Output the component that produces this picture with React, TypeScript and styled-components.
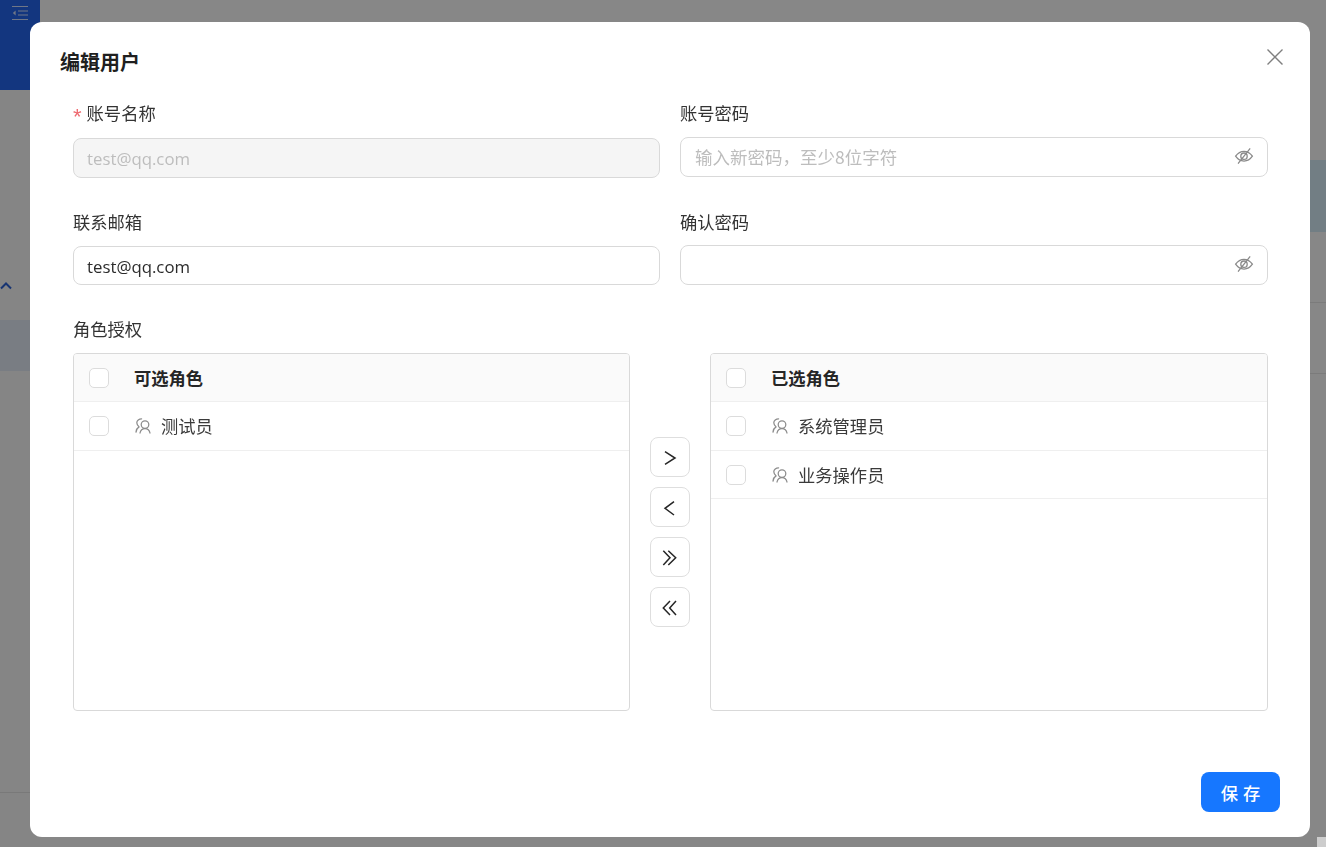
import React from "react";
import styled, { createGlobalStyle } from "styled-components";

const Global = createGlobalStyle`
  html, body { margin: 0; padding: 0; height: 100%; overflow: hidden; background: #fff; }
  * { box-sizing: border-box; }
  body { font-family: "Noto Sans CJK SC", "Open Sans", sans-serif; color: #262626; }
`;

const FONT = `"Open Sans", "Noto Sans CJK SC", sans-serif`;

/* page behind the dialog */
const Page = styled.div`
  display: grid;
  grid-template-columns: 40px 1fr;
  height: 847px;
  overflow: hidden;
  background: #fff;
`;
const Sidebar = styled.aside`
  display: flex;
  flex-direction: column;
  background: #fbfbfb;
`;
const SideHead = styled.div`
  height: 90px;
  padding: 2px 0 0 12px;
  background: #2466f0;
  color: #d4e0ff;
`;
const SideToggle = styled.div`
  height: 42px;
  margin-top: 175px;
  padding: 6px 0 0 0;
  color: #2d63d8;
`;
const SideActive = styled.div`
  height: 51px;
  margin-top: 13px;
  background: #e4ecf8;
`;
const SideFill = styled.div`
  flex: 1;
  margin-top: 421px;
  border-top: 1px solid #e4e4e4;
`;
const Main = styled.main`
  display: flex;
  flex-direction: column;
  padding-top: 160px;
`;
const Banner = styled.div`
  height: 72px;
  background: #d8eefa;
`;
const TableRow = styled.div`
  height: 71px;
  border-bottom: 1px solid #e8e8e8;
`;
const Corner = styled.div`
  position: fixed;
  right: 0;
  bottom: 0;
  width: 9px;
  height: 10px;
  background: #cdcdcd;
  z-index: 5;
`;

/* dialog */
const Mask = styled.div`
  position: fixed;
  inset: 0;
  background: rgba(0, 0, 0, 0.47);
`;
const Dialog = styled.section`
  position: absolute;
  left: 30px;
  top: 22px;
  width: 1280px;
  height: 815px;
  background: #fff;
  border-radius: 12px;
  display: flex;
  flex-direction: column;
`;
const Head = styled.header`
  display: flex;
  justify-content: space-between;
  align-items: flex-start;
  height: 80px;
  padding: 24px 25px 0 30px;
`;
const Title = styled.h2`
  margin: 0;
  font-size: 20px;
  line-height: 32px;
  font-weight: 700;
  color: #1f1f1f;
`;
const Close = styled.button`
  border: 0;
  padding: 0;
  margin-top: 1px;
  width: 20px;
  height: 20px;
  background: none;
  color: #7f7f7f;
  display: flex;
`;
const Body = styled.div`
  flex: 1;
  padding: 0 42px 0 43px;
`;
const FormGrid = styled.div`
  display: grid;
  grid-template-columns: 587px 588px;
  column-gap: 20px;
  row-gap: 32px;
  align-items: start;
`;
const Field = styled.div``;
const Label = styled.label<{ $low?: boolean; $tall?: boolean }>`
  display: block;
  height: 24px;
  margin-bottom: ${(p) => (p.$low ? "12px" : "11px")};
  font-size: 17.3px;
  line-height: ${(p) => (p.$tall ? "24px" : "22px")};
  color: #333;
`;
const Star = styled.span`
  color: #ee6a70;
  margin-right: 5px;
  font-size: 22px;
  line-height: 0;
  vertical-align: -4px;
  font-family: "Liberation Sans", sans-serif;
`;
const InputBox = styled.div<{ $disabled?: boolean; $short?: boolean }>`
  height: ${(p) => (p.$short ? "39px" : "40px")};
  display: flex;
  align-items: center;
  padding: ${(p) => (p.$short ? "1px 14px 0" : "0 14px")};
  border: 1px solid #d9d9d9;
  border-radius: 8px;
  background: ${(p) => (p.$disabled ? "#f5f5f5" : "#fff")};
`;
const InputText = styled.span<{ $muted?: boolean }>`
  flex: 1;
  margin-left: -1px;
  font-family: ${FONT};
  font-size: 16.8px;
  color: ${(p) => (p.$muted ? "#bdbdbd" : "#2b2b2b")};
`;
const Placeholder = styled.span`
  flex: 1;
  padding-bottom: 2px;
  font-size: 17.5px;
  color: #bdbdbd;
`;
const Suffix = styled.span`
  display: flex;
  margin: -2px -1px 0 auto;
  color: #8a8a8a;
`;
const RoleLabel = styled(Label)`
  margin: 32px 0 12px;
`;
const Transfer = styled.div`
  display: grid;
  grid-template-columns: 557px 80px 558px;
  height: 358px;
`;
const Panel = styled.div`
  border: 1px solid #d9d9d9;
  border-radius: 4px;
  overflow: hidden;
`;
const PanelHead = styled.div`
  display: flex;
  align-items: center;
  height: 48px;
  padding-left: 15px;
  background: #fafafa;
  border-bottom: 1px solid #efefef;
  font-size: 17.3px;
  font-weight: 700;
  color: #262626;
`;
const PanelRow = styled.div`
  display: flex;
  align-items: center;
  height: 49px;
  padding-left: 15px;
  border-bottom: 1px solid #efefef;
  font-size: 17.3px;
  color: #3a3a3a;
  & + & {
    height: 48px;
  }
`;
const Check = styled.span`
  flex: none;
  width: 20px;
  height: 20px;
  border: 1px solid #dcdcdc;
  border-radius: 5px;
  background: #fff;
`;
const HeadText = styled.span`
  margin-left: 25px;
`;
const RowText = styled.span`
  padding-bottom: 1px;
`;
const RoleIcon = styled.span`
  display: flex;
  margin: 0 9px 0 25px;
  color: #8c8c8c;
`;
const Ops = styled.div`
  display: flex;
  flex-direction: column;
  align-items: center;
  justify-content: center;
  gap: 10px;
`;
const OpButton = styled.button`
  width: 40px;
  height: 40px;
  padding: 0;
  display: flex;
  align-items: center;
  justify-content: center;
  border: 1px solid #dedede;
  border-radius: 8px;
  background: #fff;
  color: #262626;
`;
const Foot = styled.footer`
  display: flex;
  justify-content: flex-end;
  padding: 0 30px 25px 0;
`;
const Save = styled.button`
  width: 79px;
  height: 40px;
  border: 0;
  border-radius: 8px;
  background: #1677ff;
  color: #fff;
  font-family: inherit;
  font-size: 17.3px;
  font-weight: 500;
  word-spacing: 1px;
`;

const EyeOff = () => (
  <svg width="20" height="18" viewBox="0 0 20 18" fill="none" stroke="currentColor" strokeWidth="1.3" strokeLinecap="round">
    <path d="M1.6 9.2C4 5.8 6.8 4.3 10 4.3s6 1.5 8.4 4.9C16 12.6 13.2 14.1 10 14.1S4 12.6 1.6 9.2Z" />
    <circle cx="10" cy="9.2" r="3.2" />
    <path d="M15.8 1.8 4.4 16.2" />
  </svg>
);

const RoleGlyph = () => (
  <svg width="18" height="18" viewBox="0 0 18 18" fill="none" stroke="currentColor" strokeWidth="1.25" strokeLinecap="round">
    <circle cx="11" cy="7.6" r="3.8" />
    <path d="M6 16c.5-2.5 2.5-4.3 5-4.3s4.5 1.8 5 4.3" />
    <path d="M7.6 1.8C5 1.8 2.8 3.6 2.8 5.8c0 1.7 1 2.8 2.2 4.1-1.6 1-2.7 2.8-3 5.2" />
  </svg>
);

const Chevrons = ({ d }: { d: string[] }) => (
  <svg width="20" height="20" viewBox="0 0 20 20" fill="none" stroke="currentColor" strokeWidth="1.5">
    {d.map((p) => (
      <path key={p} d={p} />
    ))}
  </svg>
);

const ROLES_LEFT = ["测试员"];
const ROLES_RIGHT = ["系统管理员", "业务操作员"];

const RolePanel = ({ title, roles }: { title: string; roles: string[] }) => (
  <Panel>
    <PanelHead>
      <Check />
      <HeadText>{title}</HeadText>
    </PanelHead>
    {roles.map((r) => (
      <PanelRow key={r}>
        <Check />
        <RoleIcon>
          <RoleGlyph />
        </RoleIcon>
        <RowText>{r}</RowText>
      </PanelRow>
    ))}
  </Panel>
);

export default function App() {
  return (
    <>
      <Global />
      <Page>
        <Sidebar>
          <SideHead>
            <svg width="16" height="16" viewBox="0 0 16 16" fill="none" stroke="currentColor" strokeWidth="1.2">
              <path d="M0 1.5h16M6 6h10M6 10h10M0 14.5h16" />
              <path d="M3.6 5.6 .8 8l2.8 2.4Z" fill="currentColor" stroke="none" />
            </svg>
          </SideHead>
          <SideToggle>
            <svg width="13" height="9" viewBox="0 0 13 9" fill="none" stroke="currentColor" strokeWidth="2">
              <path d="M1 7.5 6 2.5l5 5" />
            </svg>
          </SideToggle>
          <SideActive />
          <SideFill />
        </Sidebar>
        <Main>
          <Banner />
          <TableRow />
          <TableRow />
        </Main>
      </Page>
      <Mask>
        <Dialog>
          <Head>
            <Title>编辑用户</Title>
            <Close aria-label="关闭">
              <svg width="20" height="20" viewBox="0 0 20 20" fill="none" stroke="currentColor" strokeWidth="1.4">
                <path d="M2.5 2.5l15 15M17.5 2.5l-15 15" />
              </svg>
            </Close>
          </Head>
          <Body>
            <FormGrid>
              <Field>
                <Label $low>
                  <Star>*</Star>账号名称
                </Label>
                <InputBox $disabled>
                  <InputText $muted>test@qq.com</InputText>
                </InputBox>
              </Field>
              <Field>
                <Label>账号密码</Label>
                <InputBox>
                  <Placeholder>输入新密码，至少8位字符</Placeholder>
                  <Suffix>
                    <EyeOff />
                  </Suffix>
                </InputBox>
              </Field>
              <Field>
                <Label $low $tall>联系邮箱</Label>
                <InputBox $short>
                  <InputText>test@qq.com</InputText>
                </InputBox>
              </Field>
              <Field>
                <Label $tall>确认密码</Label>
                <InputBox>
                  <Suffix>
                    <EyeOff />
                  </Suffix>
                </InputBox>
              </Field>
            </FormGrid>
            <RoleLabel $tall>角色授权</RoleLabel>
            <Transfer>
              <RolePanel title="可选角色" roles={ROLES_LEFT} />
              <Ops>
                <OpButton aria-label="右移">
                  <Chevrons d={["M5 4.7 15 11 5 17.3"]} />
                </OpButton>
                <OpButton aria-label="左移">
                  <Chevrons d={["M14 4.7 5 11.3 14 18"]} />
                </OpButton>
                <OpButton aria-label="全部右移">
                  <Chevrons d={["M3.3 3.7 10 10.7 3.3 18", "M8.3 3.7 15.7 10.7 8.3 18"]} />
                </OpButton>
                <OpButton aria-label="全部左移">
                  <Chevrons d={["M10 4 3.3 11 10 18", "M16 4 9.7 11 16 18"]} />
                </OpButton>
              </Ops>
              <RolePanel title="已选角色" roles={ROLES_RIGHT} />
            </Transfer>
          </Body>
          <Foot>
            <Save>保 存</Save>
          </Foot>
        </Dialog>
      </Mask>
      <Corner />
    </>
  );
}
